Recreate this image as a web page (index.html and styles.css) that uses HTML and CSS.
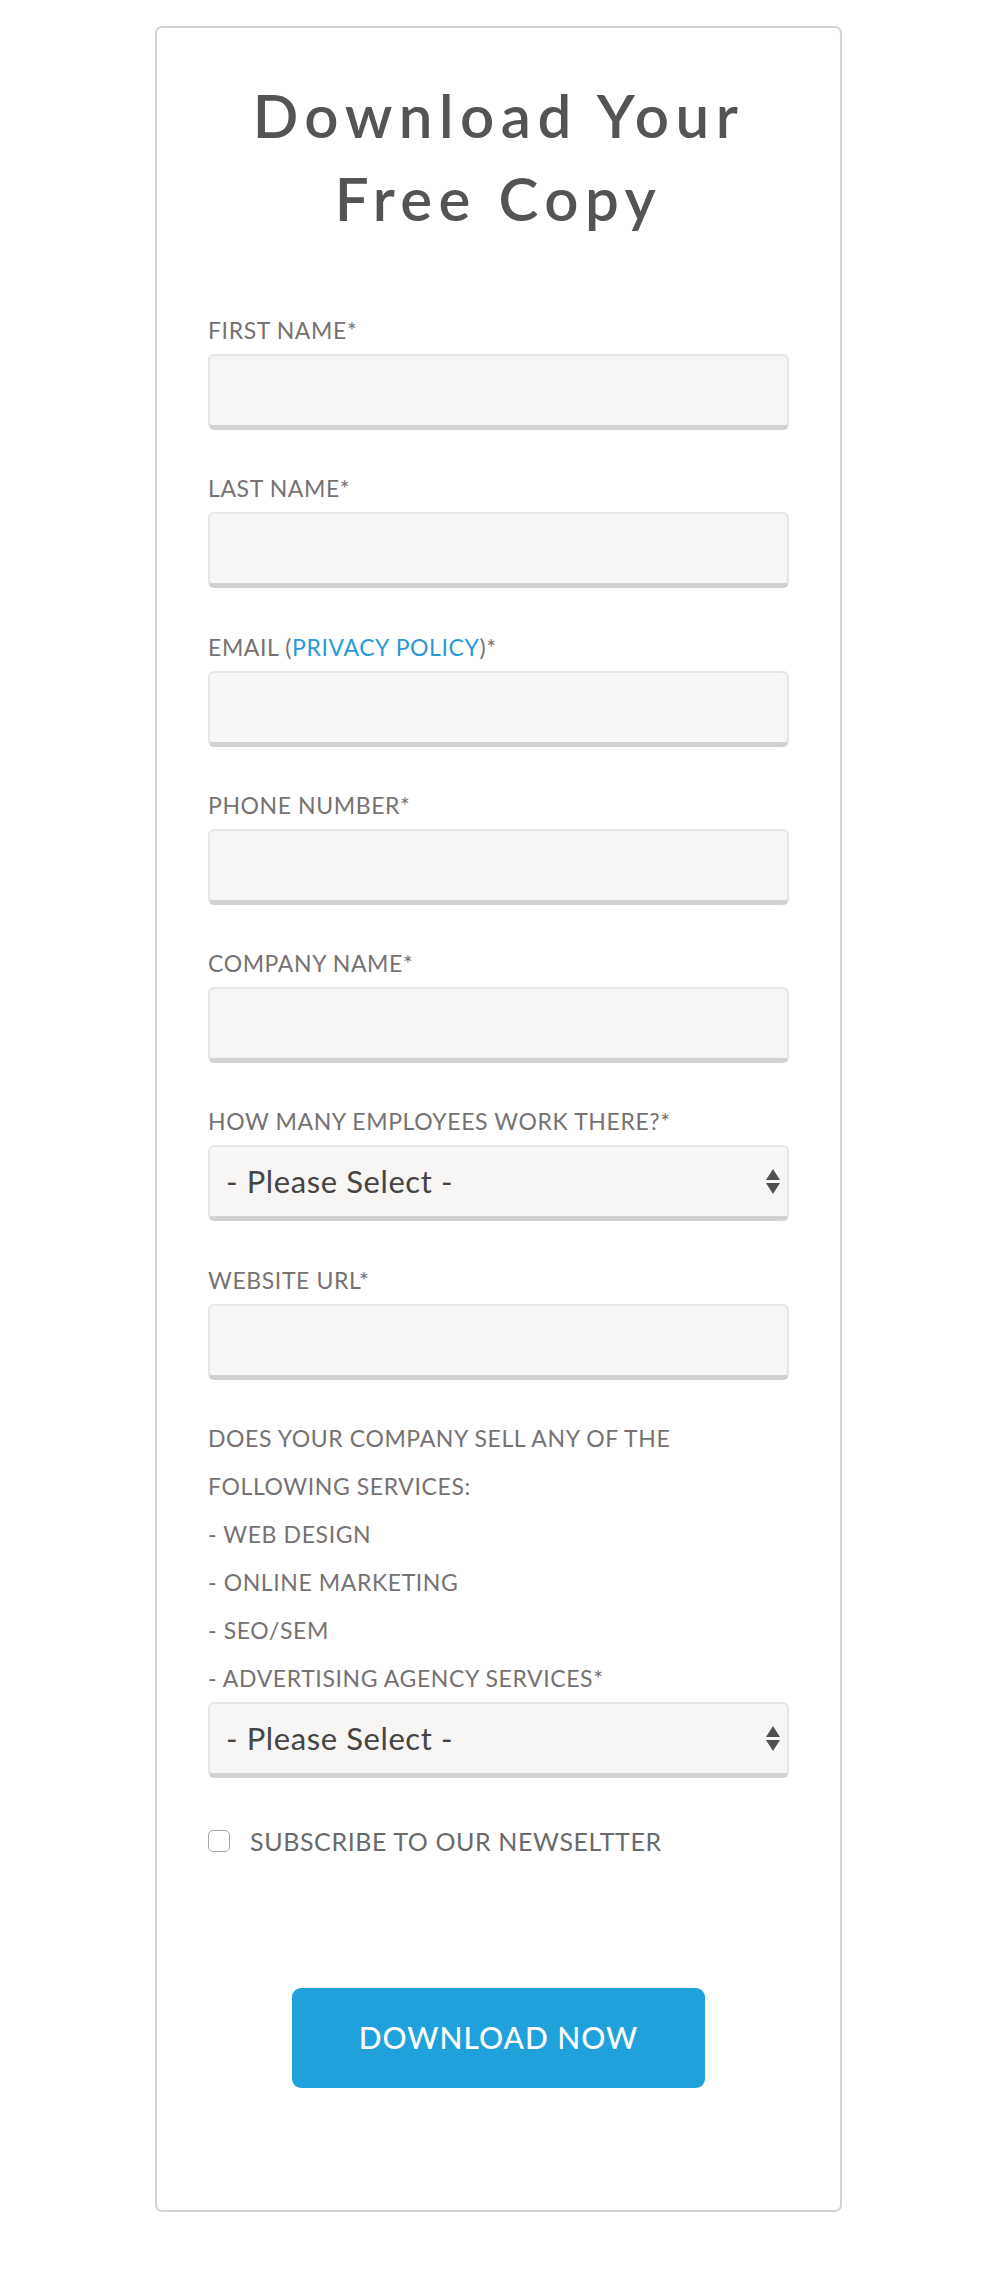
FILE: index.html
```html
<!DOCTYPE html>
<html lang="en">
<head>
<meta charset="utf-8">
<title>Download Your Free Copy</title>
<link rel="stylesheet" href="styles.css">
</head>
<body>
<div class="card">
  <h1 class="title">Download Your<br>Free Copy</h1>
  <form class="form">
    <div class="field">
      <label class="label">FIRST NAME*</label>
      <div class="input"></div>
    </div>
    <div class="field">
      <label class="label">LAST NAME*</label>
      <div class="input"></div>
    </div>
    <div class="field">
      <label class="label">EMAIL (<a class="link" href="#">PRIVACY POLICY</a>)*</label>
      <div class="input"></div>
    </div>
    <div class="field">
      <label class="label">PHONE NUMBER*</label>
      <div class="input"></div>
    </div>
    <div class="field">
      <label class="label">COMPANY NAME*</label>
      <div class="input"></div>
    </div>
    <div class="field">
      <label class="label">HOW MANY EMPLOYEES WORK THERE?*</label>
      <div class="input select">
        <span class="select-text">- Please Select -</span>
        <span class="arrows"><span class="up"></span><span class="down"></span></span>
      </div>
    </div>
    <div class="field">
      <label class="label">WEBSITE URL*</label>
      <div class="input"></div>
    </div>
    <div class="field">
      <label class="label">DOES YOUR COMPANY SELL ANY OF THE<br>FOLLOWING SERVICES:<br>- WEB DESIGN<br>- ONLINE MARKETING<br>- SEO/SEM<br>- ADVERTISING AGENCY SERVICES*</label>
      <div class="input select">
        <span class="select-text">- Please Select -</span>
        <span class="arrows"><span class="up"></span><span class="down"></span></span>
      </div>
    </div>
    <div class="check-row">
      <span class="checkbox"></span>
      <span class="check-label">SUBSCRIBE TO OUR NEWSELTTER</span>
    </div>
    <div class="actions">
      <button type="button" class="button">DOWNLOAD NOW</button>
    </div>
  </form>
</div>
</body>
</html>
```

FILE: styles.css
```css
* { box-sizing: border-box; }

html, body {
  margin: 0;
  padding: 0;
  background: #ffffff;
}

body {
  font-family: "Lato", "Open Sans", sans-serif;
  padding-top: 26px;
  min-height: 2278px;
}

.card {
  width: 687px;
  margin-left: 155px;
  border: 2px solid #d4d4d4;
  border-radius: 7px;
  padding: 46px 51px 122px 51px;
  background: #fff;
}

.title {
  margin: 0;
  text-align: center;
  font-size: 60px;
  line-height: 83px;
  font-weight: 600;
  letter-spacing: 6.5px;
  color: #545454;
}

.form {
  margin-top: 66px;
}

.field {
  margin-bottom: 34.3px;
}

.label {
  display: block;
  font-size: 23px;
  line-height: 48px;
  color: #767272;
  letter-spacing: 0.6px;
  font-weight: 400;
}

.link {
  color: #2a9ad6;
  text-decoration: none;
}

.input {
  height: 76px;
  background: #f7f6f4;
  border: 2px solid #e6e6e6;
  border-bottom: 5px solid #d2d2d2;
  border-radius: 6px;
}

.select {
  display: flex;
  align-items: center;
  justify-content: space-between;
  padding: 0 7px 0 16px;
}

.select-text {
  font-size: 31px;
  color: #454545;
  letter-spacing: 0.6px;
  padding-bottom: 2px;
}

.arrows {
  display: flex;
  flex-direction: column;
  align-items: center;
  gap: 3px;
}

.up {
  width: 0;
  height: 0;
  border-left: 7px solid transparent;
  border-right: 7px solid transparent;
  border-bottom: 11px solid #505050;
}

.down {
  width: 0;
  height: 0;
  border-left: 7px solid transparent;
  border-right: 7px solid transparent;
  border-top: 11px solid #505050;
}

.check-row {
  display: flex;
  align-items: center;
  gap: 20px;
  margin-top: 47.5px;
  height: 30px;
}

.checkbox {
  width: 22px;
  height: 22px;
  border: 1.5px solid #a8a8a8;
  border-radius: 5px;
  background: #fff;
}

.check-label {
  font-size: 25px;
  color: #6a6a6a;
  letter-spacing: 0.6px;
}

.actions {
  display: flex;
  justify-content: center;
  margin-top: 132px;
}

.button {
  width: 413px;
  height: 100px;
  background: #1fa2db;
  border: none;
  border-radius: 9px;
  color: #fff;
  font-family: "Lato", "Open Sans", sans-serif;
  font-size: 30px;
  letter-spacing: 1px;
  font-weight: 500;
  padding: 0 0 2px 0;
}
```
